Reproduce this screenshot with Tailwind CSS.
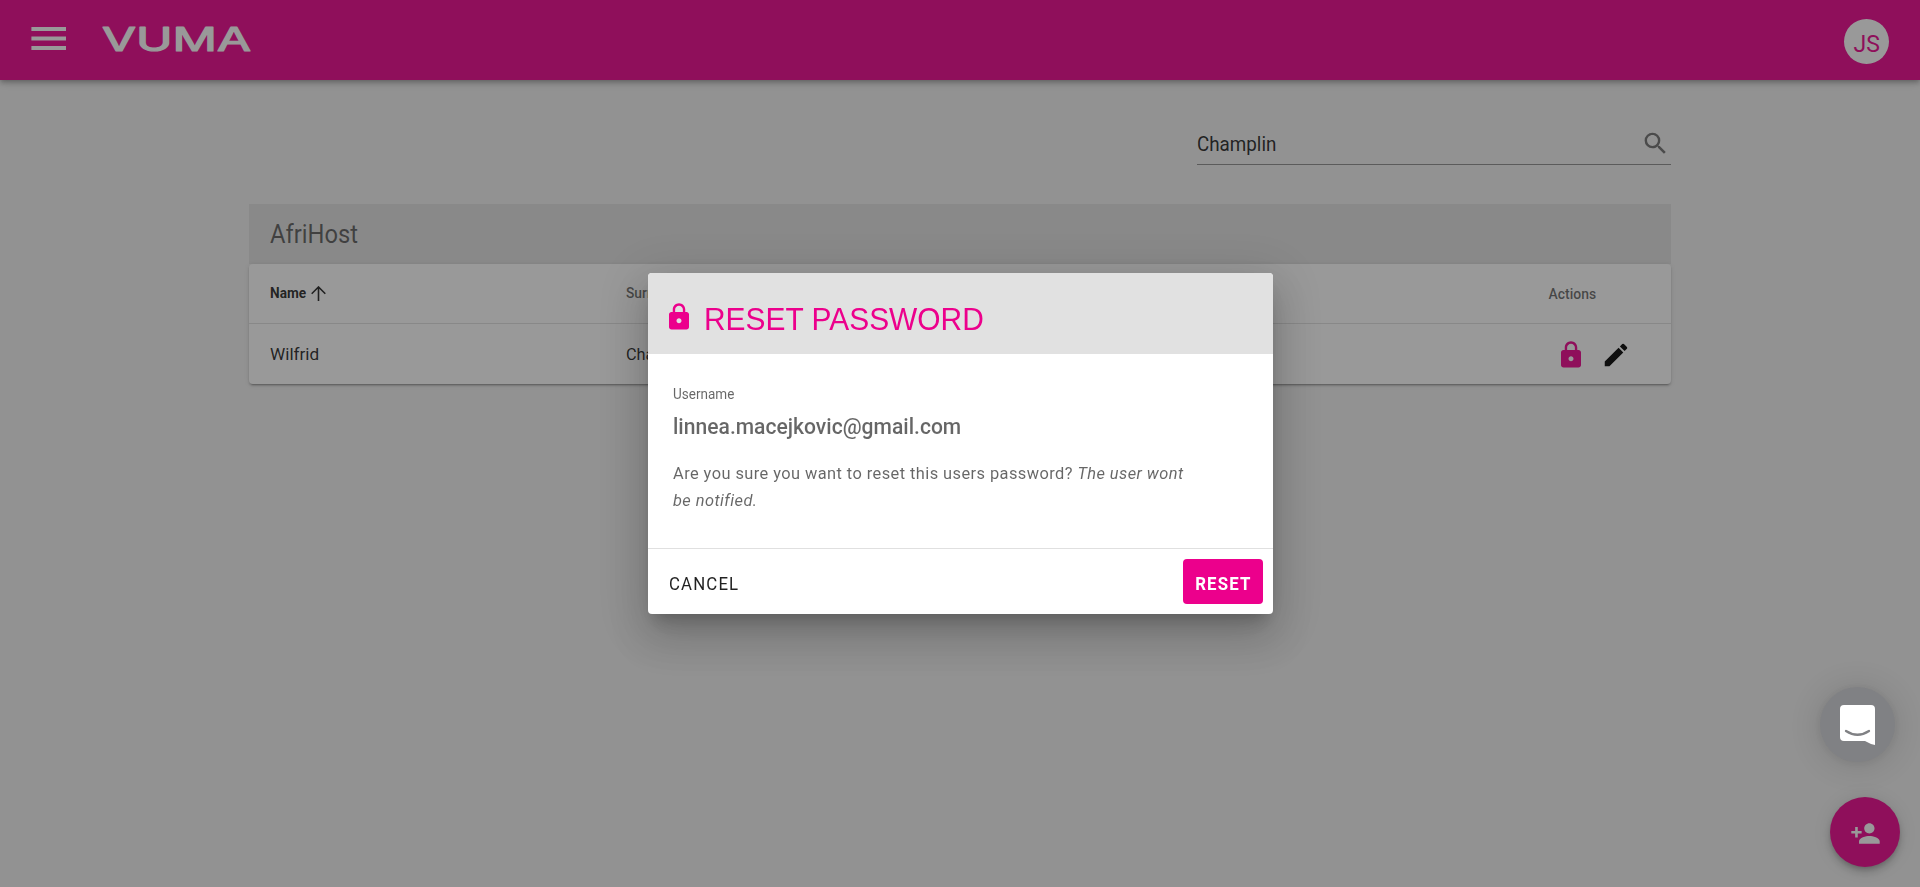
<!DOCTYPE html>
<html lang="en">
<head>
<meta charset="utf-8">
<title>Vuma - Users</title>
<script src="https://cdn.jsdelivr.net/npm/@tailwindcss/browser@4"></script>
</head>
<body class="h-[887px] overflow-hidden bg-[#f2f2f2] font-[Roboto,sans-serif] text-black/87">
<header class="flex h-20 items-center bg-[#ec008c] pl-[31px] pr-[31px] shadow-[0_2px_4px_-1px_rgba(0,0,0,.2),0_4px_5px_rgba(0,0,0,.14),0_1px_10px_rgba(0,0,0,.12)]">
  <svg class="mb-[3px] h-[23px] w-[35px] fill-white" viewBox="0 0 35 23"><path d="M.4 0H35v4H.4zM.4 9.500H35v4H.4zM.4 19H35v4H.4z"/></svg>
  <svg class="ml-[33px] h-[60px] w-[156px] fill-white stroke-white" viewBox="0 0 156 60"><text x="3" y="41" font-family="Inter, sans-serif" font-weight="400" font-size="32.500" textLength="149" lengthAdjust="spacingAndGlyphs" stroke-width="1.200" stroke-linejoin="round">VUMA</text></svg>
  <div class="ml-auto mt-[3px] flex size-[45px] items-center justify-center rounded-full bg-white text-2xl leading-none text-[#ec008c]"><span class="mt-[4px] scale-x-[.96]">JS</span></div>
</header>
<main class="mx-[249px]">
  <div class="ml-auto mt-[44px] flex h-[41px] w-[474px] items-center justify-between border-b border-black/42">
    <span class="mb-px origin-left scale-x-[.94] text-[20px]">Champlin</span>
    <svg class="mr-px mb-px size-[29px] fill-black/54" viewBox="0 0 24 24"><path d="M15.5 14h-.79l-.28-.27A6.47 6.47 0 0 0 16 9.5 6.5 6.5 0 1 0 9.5 16c1.61 0 3.09-.59 4.23-1.57l.27.28v.79l5 4.99L20.49 19zm-6 0C7.01 14 5 11.99 5 9.500S7.010 5 9.500 5 14 7.010 14 9.500 11.990 14 9.500 14"/></svg>
  </div>
  <section class="mt-[39px]">
    <div class="flex h-[60px] items-center bg-[#e1e1e1] pl-[20.5px]"><h1 class="mt-[2px] origin-left scale-x-[.95] text-[25px] text-black/60">AfriHost</h1></div>
    <div class="h-[120px] rounded bg-white shadow-[0_3px_1px_-2px_rgba(0,0,0,.2),0_2px_2px_rgba(0,0,0,.14),0_1px_5px_rgba(0,0,0,.12)]">
      <div class="flex h-[60px] items-center border-b border-black/12 pl-[20.5px] text-[15px] font-medium text-black/60">
        <div class="flex w-[356px] items-center text-black/87"><span class="w-[41px] origin-left scale-x-[.91] font-bold">Name</span>
          <svg class="size-[15px] fill-none stroke-black/87 stroke-[1.6]" viewBox="0 0 15 15"><path d="M7.500 15V1M.7 7.800 7.500 1l6.800 6.800"/></svg></div>
        <span class="origin-left scale-x-[.92]">Surname</span>
        <span class="ml-auto mr-[75px] mt-[2px] origin-right scale-x-[.93]">Actions</span>
      </div>
      <div class="flex h-[60px] items-center pl-[21px] text-[17px]">
        <div class="mt-[2px] w-[356px]"><span class="inline-block origin-left scale-x-[1.01]">Wilfrid</span></div>
        <span class="mt-[2px] origin-left scale-x-[.96]">Champlin</span>
        <svg class="ml-auto mt-[2px] size-[30px] fill-[#ec008c]" viewBox="0 0 24 24"><path d="M18 8h-1V6c0-2.760-2.240-5-5-5S7 3.240 7 6v2H6c-1.100 0-2 .9-2 2v10c0 1.100.9 2 2 2h12c1.100 0 2-.9 2-2V10c0-1.100-.9-2-2-2m-6 9c-1.100 0-2-.9-2-2s.9-2 2-2 2 .9 2 2-.9 2-2 2m3.100-9H8.900V6c0-1.710 1.390-3.100 3.100-3.100s3.100 1.390 3.100 3.100z"/></svg>
        <svg class="ml-[15px] mr-[40px] mt-[2px] size-[30px] fill-black" viewBox="0 0 24 24"><path d="M3 17.250V21h3.750L17.810 9.940l-3.750-3.750zM20.710 7.040a1 1 0 0 0 0-1.410l-2.340-2.340a1 1 0 0 0-1.410 0l-1.830 1.830 3.750 3.750z"/></svg>
      </div>
    </div>
  </section>
</main>
<button class="fixed bottom-5 right-5 flex size-[70px] items-center justify-center rounded-full bg-[#ec008c] shadow-[0_3px_5px_-1px_rgba(0,0,0,.2),0_6px_10px_rgba(0,0,0,.14),0_1px_18px_rgba(0,0,0,.12)]">
  <svg class="mt-[3px] size-[31px] fill-white" viewBox="0 0 24 24"><path d="M15 12c2.210 0 4-1.790 4-4s-1.790-4-4-4-4 1.790-4 4 1.790 4 4 4m-9-2V7H4v3H1v2h3v3h2v-3h3v-2zm9 4c-2.670 0-8 1.340-8 4v2h16v-2c0-2.660-5.330-4-8-4"/></svg>
</button>
<div class="fixed inset-0 bg-[#212121]/46"></div>
<div class="fixed left-[1820px] top-[687px] flex size-[75px] items-center justify-center rounded-full bg-[#808184] shadow-[0_1px_6px_rgba(0,0,0,.06),0_2px_32px_rgba(0,0,0,.16)]">
  <svg class="h-[40px] w-[35px]" viewBox="0 0 35 40"><path fill="#fff" d="M4 0h27q4 0 4 4v36q-5-1-10-4H4q-4 0-4-4V4q0-4 4-4z"/><path d="M6 26q11.500 7.500 23 0" fill="none" stroke="#808184" stroke-width="2.300" stroke-linecap="round"/></svg>
</div>
<div role="dialog" class="fixed left-[648px] top-[273px] flex h-[341px] w-[625px] flex-col overflow-hidden rounded bg-white text-black/60 shadow-[0_11px_15px_-7px_rgba(0,0,0,.2),0_24px_38px_3px_rgba(0,0,0,.14),0_9px_46px_8px_rgba(0,0,0,.12)]">
  <div class="flex h-[81px] items-center bg-[#e1e1e1] pl-[16px] text-[#ec008c]">
    <svg class="mt-[6px] size-[30px] fill-current" viewBox="0 0 24 24"><path d="M18 8h-1V6c0-2.760-2.240-5-5-5S7 3.240 7 6v2H6c-1.100 0-2 .9-2 2v10c0 1.100.9 2 2 2h12c1.100 0 2-.9 2-2V10c0-1.100-.9-2-2-2m-6 9c-1.100 0-2-.9-2-2s.9-2 2-2 2 .9 2 2-.9 2-2 2m3.100-9H8.900V6c0-1.710 1.390-3.100 3.100-3.100s3.100 1.390 3.100 3.100z"/></svg>
    <h2 class="ml-[10px] mt-[12px] origin-left scale-x-[.965] font-['Liberation_Sans',sans-serif] text-[31px] leading-10">RESET PASSWORD</h2>
  </div>
  <div class="h-[194px] pl-[25px] pt-[29px]">
    <div class="h-[22px] origin-left scale-x-[.965] text-[14px] leading-[22px]">Username</div>
    <div class="mt-[5px] h-8 w-[560px] origin-left scale-x-[.937] text-[22.500px] leading-8 font-medium">linnea.macejkovic@gmail.com</div>
    <p class="mt-[18px] w-[600px] origin-left scale-x-[.965] text-[17px] leading-[27px] tracking-[.44px]">Are you sure you want to reset this users password? <em>The user wont<br>be notified.</em></p>
  </div>
  <div class="flex flex-1 items-center justify-between border-t border-black/12 pl-[21px] pr-[10px]">
    <button class="mt-[5px] origin-left scale-x-[.96] text-[17.5px] tracking-[1.200px] text-black/87">CANCEL</button>
    <button class="flex h-[45px] w-[80px] items-center justify-center rounded bg-[#ec008c] text-[17.5px] font-bold tracking-[1.200px] text-white"><span class="mt-[5px] scale-x-[.96]">RESET</span></button>
  </div>
</div>
</body>
</html>
